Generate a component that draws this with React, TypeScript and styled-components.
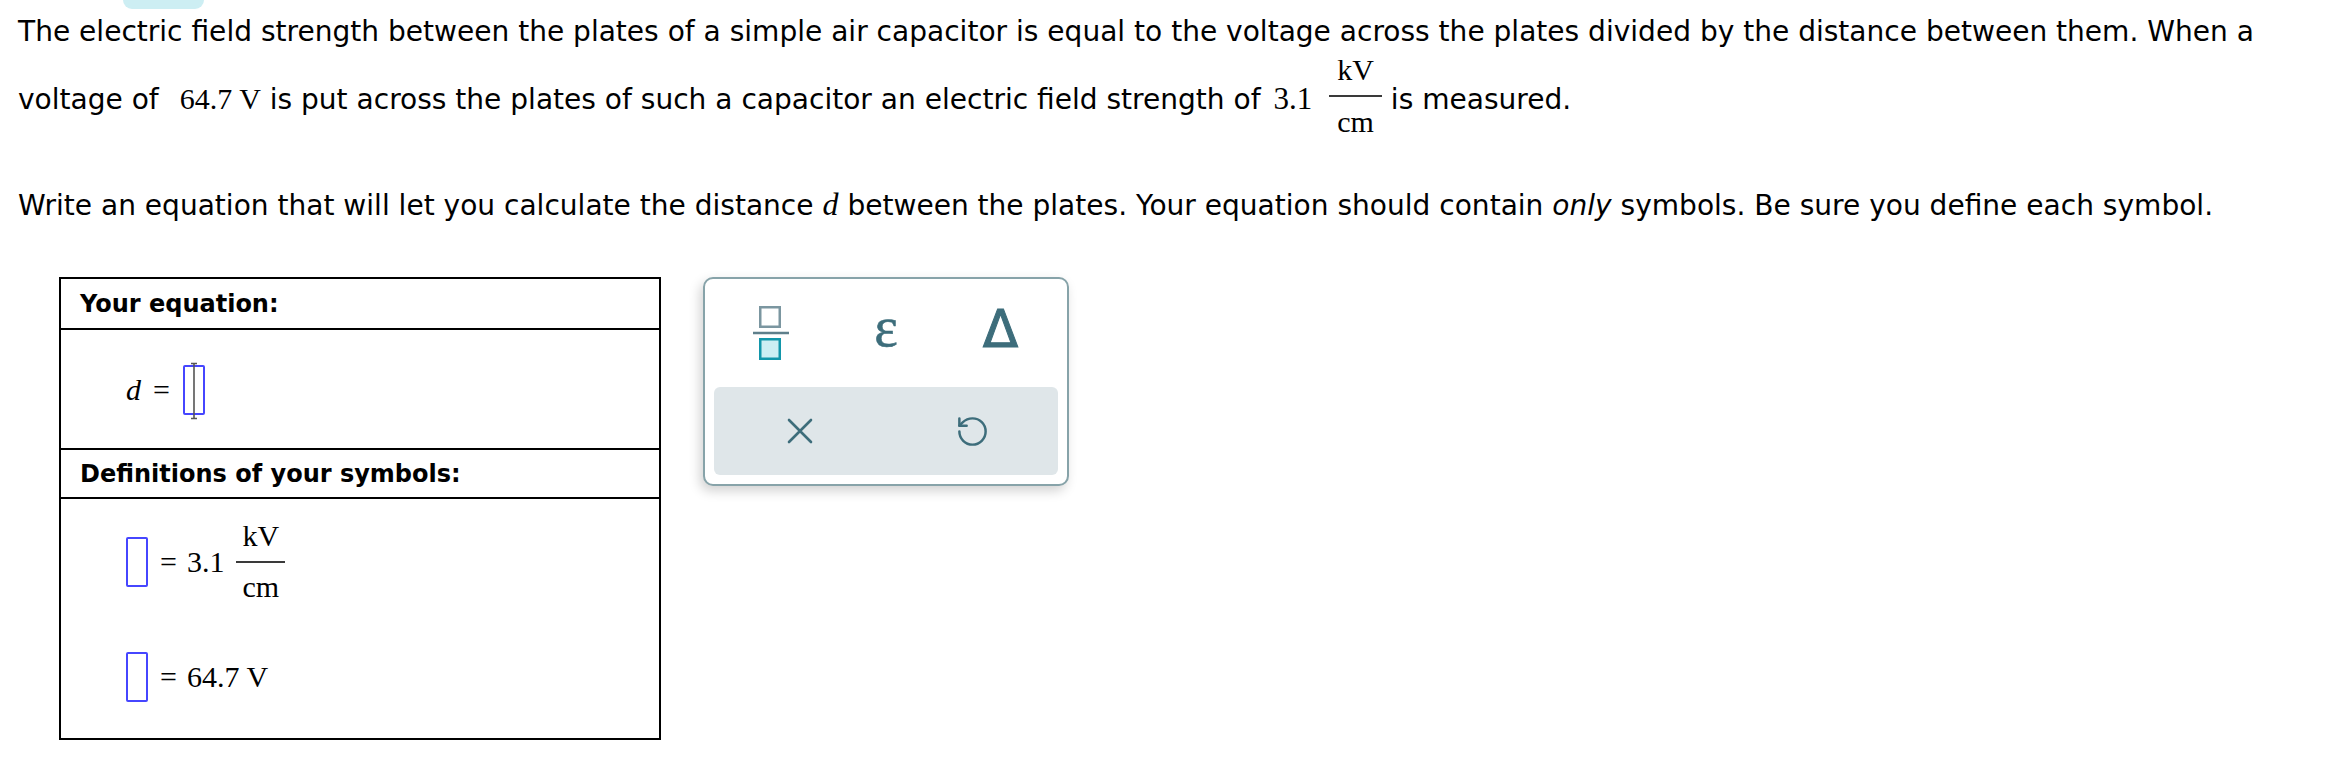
import React from "react";
import styled, { createGlobalStyle } from "styled-components";
import { RotateCcw } from "lucide-react";

const Global = createGlobalStyle`
  html, body { margin: 0; padding: 0; background: #ffffff; }
  body {
    font-family: "DejaVu Sans", Verdana, sans-serif;
    color: #000000;
  }
`;

const Page = styled.div`
  padding: 0 18px;
`;

const TopTab = styled.div`
  width: 81px;
  height: 9px;
  margin-left: 105px;
  background: #cdeef3;
  border-radius: 0 0 12px 12px;
`;

const Para = styled.p<{ $mt: number }>`
  margin: ${(p) => p.$mt}px 0 0 0;
  font-size: 28.05px;
  line-height: 40.5px;
`;

const MathText = styled.span<{ $size?: number; $italic?: boolean; $ml?: number }>`
  font-family: "Liberation Serif", "Times New Roman", serif;
  font-size: ${(p) => p.$size ?? 30}px;
  font-style: ${(p) => (p.$italic ? "italic" : "normal")};
  margin-left: ${(p) => p.$ml ?? 0}px;
`;

const Em = styled.em`
  font-style: italic;
`;

const Frac = styled.span`
  display: inline-flex;
  flex-direction: column;
  align-items: center;
  vertical-align: 29px;
  font-family: "Liberation Serif", "Times New Roman", serif;
  font-size: 30px;
  line-height: 30px;
  margin: 2px 0 0 17px;

  & > .num {
    padding: 0 8px 10px;
  }
  & > .den {
    padding: 10px 8px 0;
  }
`;

const FracBar = styled.span`
  align-self: stretch;
  height: 2px;
  background: #3a3a3a;
`;

const Workspace = styled.div`
  display: flex;
  align-items: flex-start;
  gap: 42px;
  margin-top: 51px;
  padding-left: 59px;
`;

const Table = styled.div`
  width: 602px;
  box-sizing: border-box;
  border: 2px solid #000;
`;

const HeadCell = styled.div<{ $h: number }>`
  height: ${(p) => p.$h}px;
  box-sizing: border-box;
  border-bottom: 2px solid #000;
  padding: 2px 0 0 19px;
  line-height: ${(p) => p.$h - 4}px;
  font-size: 24px;
  font-weight: bold;
`;

const EquationCell = styled.div`
  height: 120px;
  box-sizing: border-box;
  border-bottom: 2px solid #000;
  padding: 2px 0 0 65px;
  display: flex;
  align-items: center;
`;

const DefsBody = styled.div`
  height: 239px;
  box-sizing: border-box;
  padding: 22px 0 0 65px;
  display: flex;
  flex-direction: column;
  gap: 50px;
`;

const MathRow = styled.div`
  display: flex;
  align-items: center;
  font-family: "Liberation Serif", "Times New Roman", serif;
  font-size: 30px;
  line-height: 30px;
`;

const Sym = styled.span<{ $italic?: boolean; $ml?: number }>`
  font-style: ${(p) => (p.$italic ? "italic" : "normal")};
  margin-left: ${(p) => p.$ml ?? 0}px;
  white-space: pre;
`;

const SlotBox = styled.span<{ $ml?: number }>`
  position: relative;
  display: inline-block;
  width: 22px;
  height: 50px;
  box-sizing: border-box;
  border: 2px solid #4646ff;
  border-radius: 2px;
  margin-left: ${(p) => p.$ml ?? 0}px;
`;

const Caret = styled.svg`
  position: absolute;
  left: 50%;
  top: -5px;
  transform: translateX(-50%);
`;

const RowFrac = styled.span`
  display: inline-flex;
  flex-direction: column;
  align-items: center;
  margin-left: 12px;

  & > .num {
    padding: 0 6px 10px;
  }
  & > .den {
    padding: 9px 6px 0;
  }
`;

const Palette = styled.div`
  width: 366px;
  box-sizing: border-box;
  border: 2px solid #87a3a9;
  border-radius: 10px;
  padding: 0 9px 9px;
  background: #fff;
  box-shadow: -3px 5px 12px rgba(0, 0, 0, 0.18);
`;

const Keys = styled.div`
  display: grid;
  grid-template-columns: repeat(3, 1fr);
  height: 108px;
  align-items: center;
  justify-items: center;
`;

const Actions = styled.div`
  display: grid;
  grid-template-columns: 1fr 1fr;
  height: 88px;
  align-items: center;
  justify-items: center;
  background: #dfe6e9;
  border-radius: 6px;
`;

const KeyGlyph = styled.span<{ $font: string; $size: number; $lift: number; $stroke: number }>`
  font-family: ${(p) => p.$font};
  font-size: ${(p) => p.$size}px;
  line-height: ${(p) => p.$size}px;
  color: #3d6d7b;
  -webkit-text-stroke: ${(p) => p.$stroke}px #3d6d7b;
  margin-bottom: ${(p) => p.$lift * 2}px;
`;

const IconWrap = styled.span`
  display: flex;
  align-items: center;
  justify-content: center;
  color: #3d6d7b;
`;

function FractionIcon() {
  return (
    <svg width="36" height="55" viewBox="0 0 36 55">
      <rect x="7.25" y="1.25" width="19.5" height="19.5" fill="none" stroke="#7b96a0" strokeWidth="2.5" />
      <line x1="0" y1="27" x2="36" y2="27" stroke="#5e7f8b" strokeWidth="2.6" />
      <rect x="7.25" y="33.25" width="19.5" height="19.5" fill="#cdeef3" stroke="#1296aa" strokeWidth="2.5" />
    </svg>
  );
}

function CloseIcon() {
  return (
    <svg width="26" height="26" viewBox="0 0 26 26">
      <path d="M2 2 L24 24 M24 2 L2 24" stroke="#3d6d7b" strokeWidth="2.6" strokeLinecap="round" />
    </svg>
  );
}

export default function App() {
  return (
    <>
      <Global />
      <Page>
        <TopTab />
        <Para $mt={3}>
          {"The electric field strength between the plates of a simple air capacitor is equal to the voltage across the plates divided by the distance between them. When a "}
          {"voltage of "}
          <MathText $ml={12}>64.7 V</MathText>
          {" is put across the plates of such a capacitor an electric field strength of "}
          <MathText $size={31} $ml={4}>3.1</MathText>
          <Frac>
            <span className="num">kV</span>
            <FracBar />
            <span className="den">cm</span>
          </Frac>
          {" is measured."}
        </Para>
        <Para $mt={47}>
          Write an equation that will let you calculate the distance <MathText $italic $size={32}>d</MathText> between
          the plates. Your equation should contain <Em>only</Em> symbols. Be sure you define each symbol.
        </Para>
      </Page>
      <Workspace>
        <Table>
          <HeadCell $h={51}>Your equation:</HeadCell>
          <EquationCell>
            <MathRow>
              <Sym $italic>d</Sym>
              <Sym $ml={12}>=</Sym>
              <SlotBox $ml={13}>
                <Caret width="10" height="58" viewBox="0 0 10 58">
                  <path d="M5 2 V56 M2 1.5 H8 M2 56.5 H8" stroke="#555" strokeWidth="1.6" fill="none" />
                </Caret>
              </SlotBox>
            </MathRow>
          </EquationCell>
          <HeadCell $h={49}>Definitions of your symbols:</HeadCell>
          <DefsBody>
            <MathRow>
              <SlotBox />
              <Sym $ml={12}>=</Sym>
              <Sym $ml={10}>3.1</Sym>
              <RowFrac>
                <span className="num">kV</span>
                <FracBar />
                <span className="den">cm</span>
              </RowFrac>
            </MathRow>
            <MathRow>
              <SlotBox />
              <Sym $ml={12}>=</Sym>
              <Sym $ml={10}>64.7 V</Sym>
            </MathRow>
          </DefsBody>
        </Table>
        <Palette>
          <Keys>
            <IconWrap>
              <FractionIcon />
            </IconWrap>
            <KeyGlyph $font={'"Liberation Serif", "Times New Roman", serif'} $size={56} $lift={6} $stroke={0.6}>
              ε
            </KeyGlyph>
            <KeyGlyph $font={'"DejaVu Sans", sans-serif'} $size={52} $lift={4} $stroke={1}>
              Δ
            </KeyGlyph>
          </Keys>
          <Actions>
            <IconWrap>
              <CloseIcon />
            </IconWrap>
            <IconWrap>
              <RotateCcw size={35} strokeWidth={1.7} />
            </IconWrap>
          </Actions>
        </Palette>
      </Workspace>
    </>
  );
}
